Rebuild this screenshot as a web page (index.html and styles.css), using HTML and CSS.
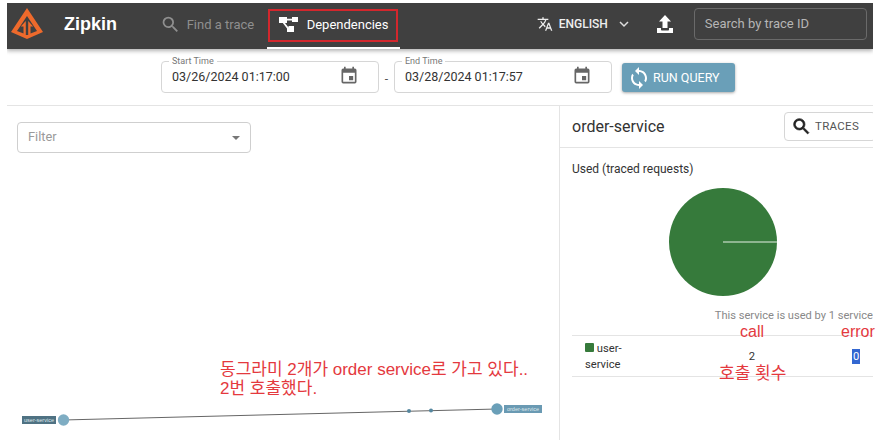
FILE: index.html
```html
<!DOCTYPE html>
<html lang="en">
<head>
<meta charset="utf-8">
<title>Zipkin</title>
<link rel="stylesheet" href="styles.css">
</head>
<body>
<div class="app">
  <header class="header">
    <svg class="logo" viewBox="0 0 34 34" width="34" height="34">
      <path fill="#ee6a2c" fill-rule="evenodd" d="M17 1 L33 25 L17 32 L1 25 Z M17 9 L7 24 L13.5 26.5 L13.5 19.5 L10.8 19.5 L15.8 14 L15.8 28 L18.2 28 L18.2 14 L23.2 19.5 L20.5 19.5 L20.5 26.5 L27 24 Z"/>
    </svg>
    <div class="brand">Zipkin</div>
    <nav class="nav">
      <a class="tab tab-muted">
        <svg viewBox="0 0 24 24" width="21" height="21"><path fill="#8f8f8f" d="M15.5 14h-.79l-.28-.27A6.471 6.471 0 0 0 16 9.500 6.500 6.500 0 1 0 9.500 16c1.610 0 3.090-.59 4.230-1.570l.27.28v.79l5 4.990L20.490 19l-4.990-5zm-6 0C7.010 14 5 11.990 5 9.500S7.010 5 9.500 5 14 7.010 14 9.500 11.990 14 9.500 14z"/></svg>
        <span>Find a trace</span>
      </a>
      <a class="tab tab-active">
        <svg viewBox="0 0 19 16" width="19" height="16"><path fill="#fff" d="M0 1h8v6H6l3.500 4.500V10H15v6H8v-3.500L3.800 7H0zM13 1h6v5h-6zM8 2.800h5v1.700H8z"/></svg>
        <span>Dependencies</span>
      </a>
    </nav>
    <div class="lang">
      <svg viewBox="0 0 24 24" width="16" height="16"><path fill="#eee" d="M12.870 15.070l-2.540-2.510.03-.03c1.740-1.940 2.980-4.170 3.710-6.530H17V4h-7V2H8v2H1v1.990h11.170C11.500 7.920 10.440 9.750 9 11.350 8.070 10.320 7.300 9.190 6.690 8h-2c.73 1.630 1.730 3.170 2.980 4.560l-5.090 5.020L4 19l5-5 3.110 3.110.76-2.040zM18.500 10h-2L12 22h2l1.120-3h4.750L21 22h2l-4.500-12zm-2.620 7l1.620-4.330L19.120 17h-3.240z"/></svg>
      <span>ENGLISH</span>
      <svg class="chev" viewBox="0 0 14 14" width="14" height="14"><path fill="none" stroke="#ddd" stroke-width="1.500" d="M3 5l4 4 4-4"/></svg>
    </div>
    <svg class="upload" viewBox="0 0 18 18" width="18" height="18"><path fill="#fff" d="M9 0l6 6.500h-3.500V13h-5V6.500H3zM1 13h4v1.500c0 .8.5 1 1 1h6c.6 0 1-.2 1-1V13h4v5H1z"/></svg>
    <div class="search">Search by trace ID</div>
  </header>

  <section class="toolbar">
    <div class="datefield">
      <span class="legend">Start Time</span>
      <span class="dateval">03/26/2024 01:17:00</span>
      <svg viewBox="0 0 24 24" width="20" height="20"><path fill="#666" d="M17 12h-5v5h5v-5zM16 1v2H8V1H6v2H5a2 2 0 0 0-2 2v14a2 2 0 0 0 2 2h14a2 2 0 0 0 2-2V5a2 2 0 0 0-2-2h-1V1h-2zm3 18H5V8h14v11z"/></svg>
    </div>
    <span class="dash">-</span>
    <div class="datefield">
      <span class="legend">End Time</span>
      <span class="dateval">03/28/2024 01:17:57</span>
      <svg viewBox="0 0 24 24" width="20" height="20"><path fill="#666" d="M17 12h-5v5h5v-5zM16 1v2H8V1H6v2H5a2 2 0 0 0-2 2v14a2 2 0 0 0 2 2h14a2 2 0 0 0 2-2V5a2 2 0 0 0-2-2h-1V1h-2zm3 18H5V8h14v11z"/></svg>
    </div>
    <button class="run">
      <svg viewBox="0 0 24 24" width="24" height="24"><path fill="#fff" d="M12 4V1L8 5l4 4V6c3.310 0 6 2.690 6 6 0 1.010-.25 1.970-.7 2.800l1.460 1.460C19.540 15.030 20 13.570 20 12c0-4.420-3.580-8-8-8zm0 14c-3.310 0-6-2.690-6-6 0-1.010.25-1.970.7-2.800L5.240 7.740C4.460 8.970 4 10.430 4 12c0 4.420 3.580 8 8 8v3l4-4-4-4v3z"/></svg>
      <span>RUN QUERY</span>
    </button>
  </section>

  <main class="main">
    <section class="graph">
      <div class="filter">
        <span>Filter</span>
        <i class="caret"></i>
      </div>
      <svg class="canvas" viewBox="0 0 552 334" width="552" height="334">
        <line x1="56" y1="314" x2="490" y2="303" stroke="#666" stroke-width="1"/>
        <circle cx="402" cy="305" r="2" fill="#55879f"/>
        <circle cx="424" cy="304.500" r="2" fill="#55879f"/>
        <rect x="15" y="310" width="34" height="8" fill="#4f7283"/>
        <text x="32" y="316" class="nodelabel">user-service</text>
        <circle cx="56.500" cy="314" r="5.700" fill="#7fadc3"/>
        <circle cx="490" cy="303" r="5.700" fill="#6a9fb8"/>
        <rect x="497" y="299" width="38" height="8" fill="#6a9ab3"/>
        <text x="516" y="305" class="nodelabel">order-service</text>
      </svg>
    </section>
    <aside class="detail">
      <div class="detail-head">
        <h2>order-service</h2>
        <button class="traces">
          <svg viewBox="0 0 24 24" width="21" height="21"><path fill="#222" stroke="#222" stroke-width=".8" d="M15.5 14h-.79l-.28-.27A6.471 6.471 0 0 0 16 9.500 6.500 6.500 0 1 0 9.500 16c1.610 0 3.090-.59 4.230-1.570l.27.28v.79l5 4.990L20.490 19l-4.990-5zm-6 0C7.010 14 5 11.990 5 9.500S7.010 5 9.500 5 14 7.010 14 9.500 11.990 14 9.500 14z"/></svg>
          <span>TRACES</span>
        </button>
      </div>
      <div class="detail-body">
        <div class="used">Used (traced requests)</div>
        <svg class="pie" viewBox="0 0 110 110" width="110" height="110">
          <circle cx="55" cy="55" r="54" fill="#367a3b"/>
          <line x1="55" y1="55" x2="109" y2="55" stroke="#e6efe6" stroke-width="1.200"/>
        </svg>
        <div class="usedby">This service is used by 1 service</div>
        <div class="row">
          <div class="cell-name"><i class="swatch"></i> user-<br>service</div>
          <div class="cell-call">2</div>
          <div class="cell-err"><span class="selected">0</span></div>
        </div>
      </div>
    </aside>
  </main>
</div>

<div class="redbox"></div>
<div class="tabline"></div>
<div class="note note-main">동그라미 2개가 order service로 가고 있다..<br>2번 호출했다.</div>
<div class="note note-call">call</div>
<div class="note note-error">error</div>
<div class="note note-count">호출 횟수</div>
</body>
</html>
```
FILE: styles.css
```css
* { box-sizing: border-box; }
html, body { margin: 0; height: 100%; }
body {
  position: relative;
  width: 885px;
  height: 440px;
  overflow: hidden;
  background: #fff;
  font-family: Roboto, "Liberation Sans", "Noto Sans CJK KR", sans-serif;
  color: #333;
}
.app {
  width: 866px;
  height: 437px;
  margin: 3px 0 0 7px;
  overflow: hidden;
  display: flex;
  flex-direction: column;
}
.header {
  flex: none;
  height: 46px;
  background: #404040;
  box-shadow: 0 2px 4px rgba(0,0,0,.3);
  display: flex;
  align-items: center;
  position: relative;
  z-index: 1;
  padding: 0 6px 4px 3px;
}
.logo { flex: none; }
.brand {
  width: 62px;
  margin-left: 20px;
  color: #fff;
  font-size: 18px;
  font-weight: 700;
  font-family: "Liberation Sans", sans-serif;
}
.nav { display: flex; margin-left: 34px; }
.tab {
  display: flex;
  align-items: center;
  font-size: 13px;
}
.tab-muted { width: 113px; color: #8f8f8f; gap: 6px; }
.tab-active { color: #fff; width: 127px; padding-left: 6px; gap: 9px; }
.lang {
  margin-left: 137px;
  display: flex;
  align-items: center;
  gap: 6px;
  color: #eee;
  font-size: 12px;
  font-weight: 500;
}
.chev { margin-left: 3px; }
.upload { margin-left: 25px; flex: none; }
.search {
  margin-left: 20px;
  width: 174px;
  height: 32px;
  border: 1px solid #6a6a6a;
  border-radius: 4px;
  color: #b5b5b5;
  font-size: 13px;
  line-height: 30px;
  padding-left: 10px;
}
.toolbar {
  flex: none;
  height: 57px;
  border-bottom: 1px solid #e4e4e4;
  display: flex;
  align-items: flex-start;
  padding: 12px 0 0 154px;
}
.datefield {
  position: relative;
  width: 218px;
  height: 32px;
  border: 1px solid #d6d6d6;
  border-radius: 4px;
  display: flex;
  align-items: center;
  justify-content: space-between;
  padding: 0 19px 2px 10px;
}
.legend {
  position: absolute;
  left: 7px;
  top: -6px;
  padding: 0 3px;
  background: #fff;
  font-size: 9px;
  line-height: 11px;
  color: #777;
}
.dateval { font-size: 12.500px; color: #333; }
.dash {
  width: 15px;
  text-align: center;
  font-size: 12px;
  line-height: 36px;
  color: #555;
}
.run {
  margin: 2px 0 0 10px;
  width: 113px;
  height: 29px;
  border: 0;
  border-radius: 3px;
  background: #6a9fb8;
  box-shadow: 0 1px 3px rgba(0,0,0,.35);
  color: #fff;
  font: 400 12.500px Roboto, sans-serif;
  display: flex;
  align-items: center;
  gap: 2px;
  padding: 0 0 0 5px;
}
.main { flex: 1; display: flex; min-height: 0; }
.graph {
  flex: none;
  width: 553px;
  border-right: 1px solid #e4e4e4;
  padding: 16px 0 0 10px;
  position: relative;
}
.filter {
  width: 234px;
  height: 31px;
  border: 1px solid #cfcfcf;
  border-radius: 4px;
  display: flex;
  align-items: center;
  justify-content: space-between;
  padding: 0 10px 2px;
  font-size: 12.800px;
  color: #9a9a9a;
}
.caret {
  width: 0;
  height: 0;
  margin-top: 2px;
  border-left: 4.500px solid transparent;
  border-right: 4.500px solid transparent;
  border-top: 4.500px solid #777;
}
.canvas { position: absolute; left: 0; top: 0; }
.nodelabel {
  font-size: 5.500px;
  fill: #dfe8ec;
  text-anchor: middle;
  font-family: "Liberation Sans", sans-serif;
}
.detail { flex: 1; min-width: 0; overflow: hidden; }
.detail-head {
  height: 42px;
  border-bottom: 1px solid #e4e4e4;
  display: flex;
  align-items: center;
  justify-content: space-between;
  padding-left: 12px;
}
.detail-head h2 {
  margin: 0;
  font-size: 16px;
  font-weight: 400;
  color: #333;
}
.traces {
  flex: none;
  width: 92px;
  height: 29px;
  margin-right: -3px;
  margin-top: -1px;
  border: 1px solid #d6d6d6;
  border-radius: 4px;
  background: #fff;
  display: flex;
  align-items: center;
  gap: 3px;
  padding: 0 0 0 6px;
  font: 400 11.500px Roboto, sans-serif;
  color: #555;
  letter-spacing: .3px;
}
.detail-body { padding: 13px 0 0 12px; }
.used { font-size: 12px; line-height: 16px; color: #333; }
.pie { display: block; margin: 10px 0 0 96px; }
.usedby {
  margin-top: 12px;
  font-size: 11.100px;
  line-height: 14px;
  color: #888;
  text-align: right;
  white-space: nowrap;
}
.row {
  margin-top: 12px;
  height: 42px;
  border-top: 1px solid #e4e4e4;
  border-bottom: 1px solid #e4e4e4;
  display: flex;
  align-items: center;
  font-size: 11.200px;
  color: #333;
}
.cell-name { width: 173px; padding: 2px 0 0 13px; line-height: 16px; }
.swatch {
  display: inline-block;
  width: 9px;
  height: 9px;
  background: #367a3b;
  border-radius: 1px;
}
.cell-call { width: 14px; text-align: center; }
.cell-err { margin-left: 93px; }
.selected { background: #3367d1; color: #fff; padding: 1px; }
.redbox {
  position: absolute;
  left: 268px;
  top: 9px;
  width: 130px;
  height: 33px;
  border: 2px solid #d3272d;
  z-index: 2;
}
.tabline {
  position: absolute;
  left: 267px;
  top: 47px;
  width: 133px;
  height: 2px;
  background: #fff;
  z-index: 2;
}
.note {
  position: absolute;
  z-index: 2;
  color: #e4393e;
  font-family: "Liberation Sans", "Noto Sans CJK KR", sans-serif;
  font-size: 16px;
  line-height: 19px;
  white-space: nowrap;
}
.note-main { left: 220px; top: 360px; font-size: 17px; }
.note-call { left: 740px; top: 322px; }
.note-error { left: 841px; top: 322px; }
.note-count { left: 719px; top: 364px; font-size: 17px; }
```
